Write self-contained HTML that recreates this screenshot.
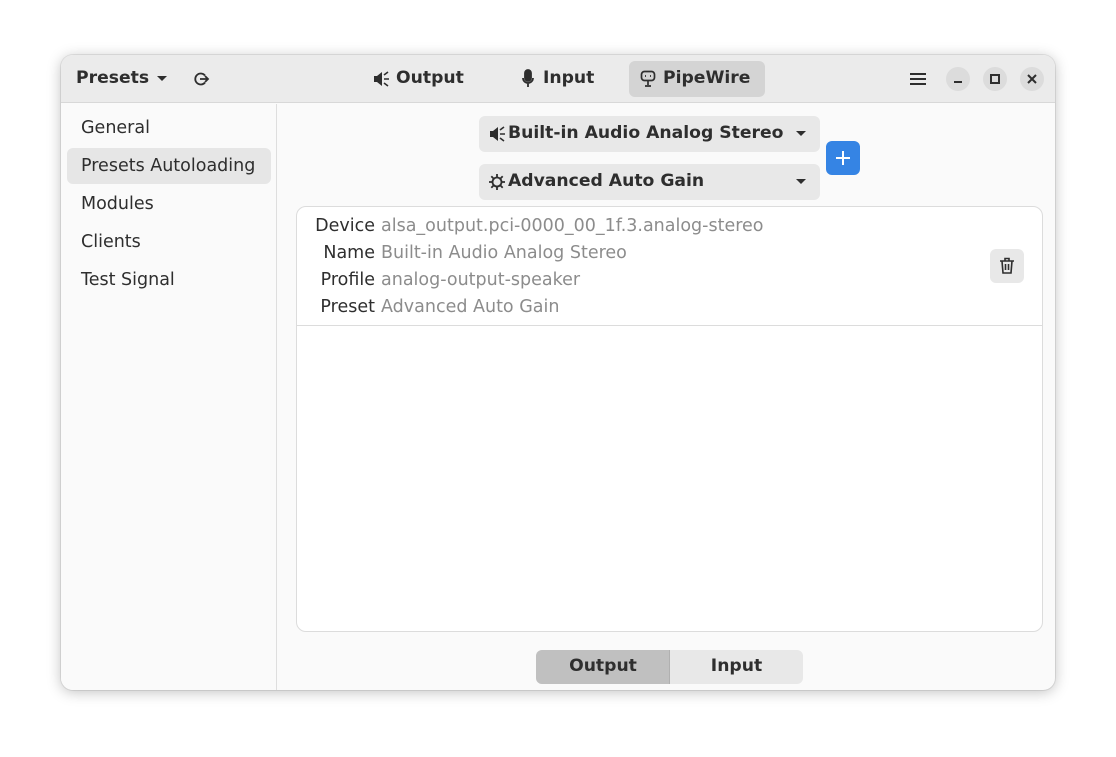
<!DOCTYPE html>
<html><head><style>
*{box-sizing:border-box;margin:0;padding:0}
body{width:1116px;height:757px;background:#fff;font-family:"DejaVu Sans","Liberation Sans",sans-serif;font-size:17.5px;color:#2e2e2e;position:relative;overflow:hidden}
.win{position:absolute;left:61px;top:55px;width:994px;height:635px;background:#fafafa;border-radius:12px;box-shadow:0 2px 14px rgba(0,0,0,.25),0 0 0 1px rgba(0,0,0,.08);overflow:hidden}
.hdr{position:absolute;left:0;top:0;width:994px;height:48px;background:#ebebeb;border-bottom:1px solid #d8d8d8}
.a{position:absolute;white-space:nowrap}
.b{font-weight:bold;font-size:17.2px}
.side{position:absolute;left:0;top:49px;width:216px;height:586px;border-right:1px solid #dedede;background:#fafafa}
.dd{position:absolute;background:#e8e8e8;border-radius:6px;height:36px}
.circ{position:absolute;width:24px;height:24px;border-radius:12px;background:#dcdcdc}
</style></head><body>
<div class="win">
 <div class="hdr">
  <div class="a b" style="left:15px;top:13px">Presets</div>
  <svg class="a" style="left:95px;top:20px" width="12" height="7"><path d="M1 1h10L6 6z" fill="#2e2e2e"/></svg>
  <svg class="a" style="left:133px;top:16px" width="16" height="16" fill="none" stroke="#2e2e2e" stroke-width="1.8"><path d="M11 4.5A5.5 5.5 0 1 0 11 11.5"/><path d="M6 8h8M11 5l3 3-3 3"/></svg>
  <svg class="a" style="left:311px;top:15px" width="18" height="18"><path d="M2 6h3l5-4v14l-5-4H2z" fill="#2e2e2e"/><path d="M12 5l4-3M12 9h5M12 13l4 3" stroke="#2e2e2e" stroke-width="1.6"/></svg>
  <div class="a b" style="left:335px;top:13px">Output</div>
  <svg class="a" style="left:460px;top:14px" width="14" height="20" fill="none" stroke="#2e2e2e" stroke-width="1.8"><rect x="4" y="1" width="6" height="11" rx="3" fill="#2e2e2e"/><path d="M2 9a5 5 0 0 0 10 0M7 14v4"/></svg>
  <div class="a b" style="left:482px;top:13px">Input</div>
  <div class="a" style="left:568px;top:6px;width:136px;height:36px;background:#d4d4d4;border-radius:6px"></div>
  <svg class="a" style="left:579px;top:15px" width="16" height="18" fill="none" stroke="#2e2e2e" stroke-width="1.7"><rect x="1.5" y="1.5" width="13" height="9" rx="3"/><path d="M5 6h1M10 6h1M8 11v4M5 16h6"/></svg>
  <div class="a b" style="left:602px;top:13px">PipeWire</div>
  <svg class="a" style="left:849px;top:17px" width="16" height="14" stroke="#2e2e2e" stroke-width="2"><path d="M0 2h16M0 7h16M0 12h16"/></svg>
  <div class="circ" style="left:885px;top:12px"></div><svg class="a" style="left:893px;top:20px" width="8" height="8"><path d="M0 7h8" stroke="#2e2e2e" stroke-width="2"/></svg>
  <div class="circ" style="left:922px;top:12px"></div><svg class="a" style="left:929px;top:19px" width="10" height="10"><rect x="1" y="1" width="8" height="8" fill="none" stroke="#2e2e2e" stroke-width="2"/></svg>
  <div class="circ" style="left:959px;top:12px"></div><svg class="a" style="left:966px;top:19px" width="10" height="10"><path d="M1 1l8 8M9 1l-8 8" stroke="#2e2e2e" stroke-width="2"/></svg>
 </div>
 <div class="side">
  <div class="a" style="left:20px;top:14px">General</div>
  <div class="a" style="left:6px;top:44px;width:204px;height:36px;background:#e6e6e6;border-radius:6px"></div>
  <div class="a" style="left:20px;top:52px">Presets Autoloading</div>
  <div class="a" style="left:20px;top:90px">Modules</div>
  <div class="a" style="left:20px;top:128px">Clients</div>
  <div class="a" style="left:20px;top:166px">Test Signal</div>
 </div>
 <div class="dd" style="left:418px;top:61px;width:341px"></div>
 <svg class="a" style="left:427px;top:70px" width="18" height="18"><path d="M2 6h3l5-4v14l-5-4H2z" fill="#2e2e2e"/><path d="M12 5l4-3M12 9h5M12 13l4 3" stroke="#2e2e2e" stroke-width="1.6"/></svg>
 <div class="a b" style="left:447px;top:68px">Built-in Audio Analog Stereo</div>
 <svg class="a" style="left:734px;top:75px" width="12" height="7"><path d="M1 1h10L6 6z" fill="#2e2e2e"/></svg>
 <div class="dd" style="left:418px;top:109px;width:341px"></div>
 <svg class="a" style="left:427px;top:118px" width="18" height="18" fill="none" stroke="#2e2e2e" stroke-width="1.8"><circle cx="9" cy="9" r="4.5"/><path d="M9 1v3M9 14v3M1 9h3M14 9h3M3.3 3.3l2.1 2.1M12.6 12.6l2.1 2.1M3.3 14.7l2.1-2.1M12.6 5.4l2.1-2.1"/></svg>
 <div class="a b" style="left:447px;top:116px">Advanced Auto Gain</div>
 <svg class="a" style="left:734px;top:123px" width="12" height="7"><path d="M1 1h10L6 6z" fill="#2e2e2e"/></svg>
 <div class="a" style="left:765px;top:86px;width:34px;height:34px;background:#3584e4;border-radius:6px"></div>
 <svg class="a" style="left:774px;top:95px" width="16" height="16"><path d="M8 1v14M1 8h14" stroke="#fff" stroke-width="2"/></svg>
 <div class="a" style="left:235px;top:151px;width:747px;height:426px;background:#fff;border:1px solid #dcdcdc;border-radius:10px"></div>
 <div class="a" style="left:236px;top:270px;width:745px;height:1px;background:#dcdcdc"></div>
 <div class="a" style="left:200px;top:158px;width:114px;text-align:right;line-height:27px">Device<br>Name<br>Profile<br>Preset</div>
 <div class="a" style="left:320px;top:158px;line-height:27px;color:#8c8c8c">alsa_output.pci-0000_00_1f.3.analog-stereo<br>Built-in Audio Analog Stereo<br>analog-output-speaker<br>Advanced Auto Gain</div>
 <div class="a" style="left:929px;top:194px;width:34px;height:34px;background:#e8e8e8;border-radius:6px"></div>
 <svg class="a" style="left:938px;top:202px" width="16" height="18" fill="none" stroke="#2e2e2e" stroke-width="1.6"><path d="M1 4h14M6 4V1.5h4V4M3 4l1 12h8l1-12M6.5 7v6M9.5 7v6"/></svg>
 <div class="a" style="left:475px;top:595px;width:267px;height:34px;background:#e8e8e8;border-radius:6px;overflow:hidden">
  <div style="position:absolute;left:0;top:0;width:134px;height:34px;background:#c0c0c0;border-right:1px solid #b0b0b0"></div>
 </div>
 <div class="a b" style="left:475px;top:601px;width:134px;text-align:center">Output</div>
 <div class="a b" style="left:609px;top:601px;width:133px;text-align:center">Input</div>
</div>
</body></html>
